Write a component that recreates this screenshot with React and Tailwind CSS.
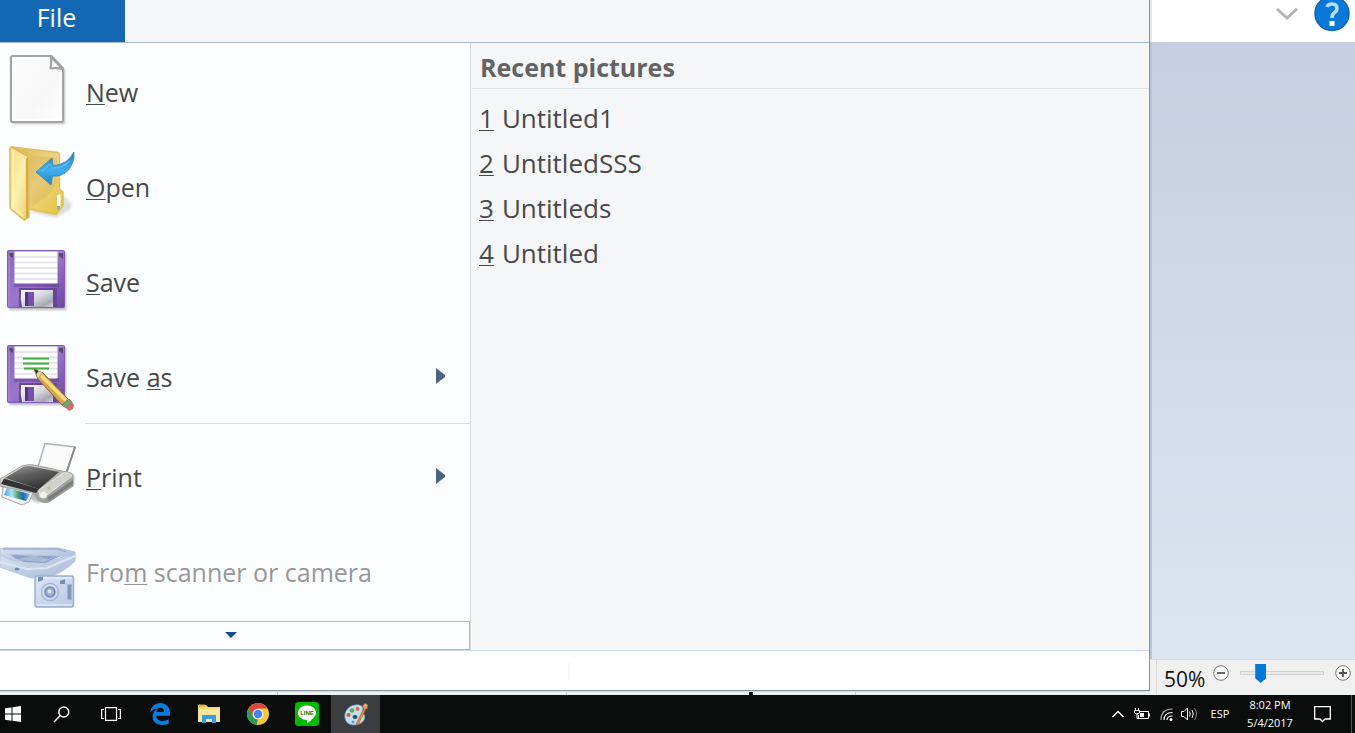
import { useState } from "react";

function NewIcon() {
  return (
    <svg width="76" height="95" viewBox="0 0 76 95" className="shrink-0" aria-hidden="true">
      <defs>
        <linearGradient id="page" x1="0" y1="0" x2="1" y2="1">
          <stop offset="0" stopColor="#fdfdfd" />
          <stop offset="0.6" stopColor="#f7f7f7" />
          <stop offset="1" stopColor="#fefefe" />
        </linearGradient>
        <filter id="soft" x="-20%" y="-20%" width="140%" height="140%">
          <feGaussianBlur stdDeviation="1.2" />
        </filter>
      </defs>
      <path d="M12 15H53L65 27V81H12Z" fill="#9a9a9a" opacity="0.55" filter="url(#soft)" />
      <path d="M12 13H51.500L63 25.500V77Q63 79 61 79H13Q11 79 11 77V14.500Q11 13 12.500 13Z" fill="url(#page)" stroke="#a3a3a3" strokeWidth="2.200" />
      <path d="M13 15H49V27H61V77H13Z" fill="none" stroke="#fff" strokeWidth="1.500" />
      <path d="M51 14Q51.500 20 50.500 25.500Q56 24.500 62.500 26Z" fill="#fbfbfb" stroke="#a3a3a3" strokeWidth="2.200" strokeLinejoin="round" />
    </svg>
  );
}

function OpenIcon() {
  return (
    <svg width="76" height="95" viewBox="0 0 76 95" className="shrink-0" aria-hidden="true">
      <defs>
        <linearGradient id="cover" x1="0" y1="0" x2="1" y2="1">
          <stop offset="0" stopColor="#f3da84" />
          <stop offset="0.5" stopColor="#fdf0ae" />
          <stop offset="1" stopColor="#e9c964" />
        </linearGradient>
        <linearGradient id="back" x1="0" y1="0" x2="1" y2="1">
          <stop offset="0" stopColor="#dcb75c" />
          <stop offset="0.5" stopColor="#eed482" />
          <stop offset="1" stopColor="#e4c43e" />
        </linearGradient>
        <linearGradient id="arrow" x1="0" y1="0" x2="0" y2="1">
          <stop offset="0" stopColor="#2a79b8" />
          <stop offset="0.55" stopColor="#3fb0ee" />
          <stop offset="1" stopColor="#1f7fc4" />
        </linearGradient>
      </defs>
      <path d="M30 74L56 80L70 72L72 66L62 56Z" fill="#999" opacity="0.3" filter="url(#soft)" />
      <path d="M12 9L58 14.500Q59.500 15 59.500 17V51L63 54V68L56 76.500L29 71L26 20Z" fill="url(#back)" stroke="#e3be58" strokeWidth="1.300" strokeLinejoin="round" />
      <path d="M30 18L57 19V46Q45 62 31 69Z" fill="#cda751" opacity="0.25" />
      <path d="M57 58Q59 55 60.500 57V69L57 72Z" fill="#fff" />
      <path d="M57 68H60V71L57 72Z" fill="#7fb7b0" />
      <path d="M10 10Q10 9 12 9L27 18Q29 20 29 23V79L24 82L11 71Q10 70 10 68Z" fill="url(#cover)" stroke="#dfb850" strokeWidth="1.500" strokeLinejoin="round" />
      <path d="M27 20V80" stroke="#d4a947" strokeWidth="2" />
      <path d="M13 12V69L23 78" fill="none" stroke="#fff6cb" strokeWidth="1.500" opacity="0.8" />
      <path d="M36 34L52 20L53 27.500Q67 27 74 14Q75 23 68.500 32Q62 39 52.500 38L51 47Z" fill="url(#arrow)" stroke="#3286bd" strokeWidth="0.800" />
      <path d="M42 33L50 26L52 30Q63 30 70 23" fill="none" stroke="#62bdf0" strokeWidth="1.200" />
    </svg>
  );
}

function Floppy() {
  return (
    <>
      <defs>
        <linearGradient id="purple" x1="0" y1="0" x2="1" y2="1">
          <stop offset="0" stopColor="#8c68bd" />
          <stop offset="0.5" stopColor="#9b77cb" />
          <stop offset="1" stopColor="#6d459f" />
        </linearGradient>
        <linearGradient id="steel" x1="0" y1="0" x2="1" y2="1">
          <stop offset="0" stopColor="#fff" />
          <stop offset="0.5" stopColor="#d5d5de" />
          <stop offset="0.8" stopColor="#a7a7b3" />
          <stop offset="1" stopColor="#d8d8df" />
        </linearGradient>
      </defs>
      <rect x="9" y="19" width="57" height="58" fill="#777" opacity="0.5" filter="url(#soft)" />
      <rect x="7.500" y="17.500" width="57" height="57" rx="1" fill="url(#purple)" stroke="#7f5bb2" />
      <path d="M9 73V19H63" fill="none" stroke="#a98bd6" />
      <path d="M9 20H13V25L10 23Z" fill="#5a4a6a" />
      <path d="M63 20H59V23L63 26Z" fill="#5a4a6a" />
      <rect x="14" y="50" width="45" height="4" fill="#60358f" opacity="0.5" />
      <rect x="14.500" y="18.500" width="43" height="32" fill="#fff" />
      <path d="M15 24H57M15 29.500H57M15 35H57M15 40.500H57M15 46H57" stroke="#dedee6" strokeWidth="1.300" />
      <rect x="19" y="55" width="38" height="19" fill="#68459a" />
      <path d="M21 57H53V74H22Q20 66 21 57Z" fill="url(#steel)" />
      <rect x="25" y="59" width="9" height="14" fill="#7650a9" />
      <path d="M25 59H28V73H25Z" fill="#583284" />
    </>
  );
}

function SaveIcon() {
  return (
    <svg width="76" height="95" viewBox="0 0 76 95" className="shrink-0" aria-hidden="true">
      <Floppy />
    </svg>
  );
}

function SaveAsIcon() {
  return (
    <svg width="76" height="95" viewBox="0 0 76 95" className="shrink-0" aria-hidden="true">
      <Floppy />
      <path d="M23 30.500H49M23 35.500H49M24 40.500H49" stroke="#a9e0a9" strokeWidth="3" />
      <path d="M23 30.500H49M23 35.500H49M24 40.500H49" stroke="#45ad45" strokeWidth="1.500" />
      <path d="M34 41L43 45L69 72L62 77L38 51Z" fill="#d9a54b" stroke="#8a6a3a" strokeWidth="1" />
      <path d="M42 46L67 71L65 74L40 49Z" fill="#f5dc7c" />
      <path d="M34 41L42 44.500L38 50Z" fill="#e8cda0" />
      <path d="M34 41L38.500 43L36.500 46Z" fill="#2b2b2b" />
      <path d="M62 77L69 71L72 74L66 80Z" fill="#7a9f78" stroke="#647a61" strokeWidth="0.800" />
      <path d="M66 80L72 74L74 77L73 81L69 83Z" fill="#d46a6a" />
    </svg>
  );
}

function PrintIcon() {
  return (
    <svg width="76" height="95" viewBox="0 0 76 95" className="shrink-0" aria-hidden="true">
      <defs>
        <linearGradient id="printer" x1="0" y1="0" x2="0.5" y2="1">
          <stop offset="0" stopColor="#a0a0a0" />
          <stop offset="0.45" stopColor="#606060" />
          <stop offset="1" stopColor="#343434" />
        </linearGradient>
        <linearGradient id="shell" x1="0" y1="0" x2="1" y2="1">
          <stop offset="0" stopColor="#f0f0ed" />
          <stop offset="0.5" stopColor="#b5b5b2" />
          <stop offset="1" stopColor="#898986" />
        </linearGradient>
        <linearGradient id="photo" x1="0" y1="0" x2="1" y2="0">
          <stop offset="0" stopColor="#4c9be8" />
          <stop offset="0.3" stopColor="#a9e6f2" />
          <stop offset="0.55" stopColor="#4d9c68" />
          <stop offset="0.75" stopColor="#1667cb" />
          <stop offset="1" stopColor="#89bde0" />
        </linearGradient>
      </defs>
      <path d="M0 57L38 75L74 57L74 46L40 60L2 50Z" fill="#777" opacity="0.45" filter="url(#soft)" />
      <path d="M45 15.500L75 19L66 46L38 39Z" fill="#fafafa" stroke="#b1b1b1" strokeWidth="1.500" />
      <path d="M75 19L66 46" stroke="#8a8a8a" strokeWidth="2" />
      <path d="M0 51L22 38Q30 35 39 38L71 45Q74 47 73 51L73 58L49 74Q43 76 38 72L34 66L0 58Z" fill="url(#shell)" stroke="#9c9c99" />
      <path d="M5 50L23 39Q26 38 30 38L59 44L39 61Z" fill="url(#printer)" />
      <path d="M4 50.500L39 61L36 65L1 56Z" fill="#333" />
      <path d="M39 62L63 45Q70 44 72 48L47 67L40 69Z" fill="#d0d0cd" stroke="#e7e7e5" />
      <path d="M47 70L73 52V56L49 73Z" fill="#666" opacity="0.6" />
      <circle cx="43.500" cy="67" r="3.500" fill="#f1f1e9" />
      <circle cx="49" cy="60" r="1.500" fill="#aac197" />
      <path d="M3 59L33 65L29 74L22 77L2 69Z" fill="#f0f1f2" stroke="#a9a9a9" />
      <path d="M7 60L30 66L26 73L4 67Z" fill="url(#photo)" />
    </svg>
  );
}

function ScannerIcon() {
  return (
    <svg width="76" height="95" viewBox="0 0 76 95" className="shrink-0" aria-hidden="true">
      <defs>
        <linearGradient id="scan" x1="0" y1="0" x2="1" y2="1">
          <stop offset="0" stopColor="#d8e2f2" />
          <stop offset="0.5" stopColor="#c0cfe5" />
          <stop offset="1" stopColor="#a5b9d6" />
        </linearGradient>
        <linearGradient id="cam" x1="0" y1="0" x2="1" y2="1">
          <stop offset="0" stopColor="#dce5f4" />
          <stop offset="1" stopColor="#b9c9e2" />
        </linearGradient>
      </defs>
      <path d="M0 31L21 37L46 40L75 29V38Q65 48 52 53L31 55L0 44Z" fill="url(#scan)" stroke="#b4c5de" />
      <path d="M7 32L30 30L66 31L45 40L24 39Z" fill="#8ba0c3" />
      <path d="M16 37L34 32L48 36L64 31L44 39Z" fill="#a9bad3" />
      <path d="M0 26Q5 24 10 25L58 25L75 29Q76 33 67 33L20 32L9 31L19 38Q9 38 0 31Z" fill="url(#scan)" stroke="#b4c5de" />
      <path d="M3 26H57L67 29" fill="none" stroke="#9db0cf" strokeWidth="1.500" />
      <path d="M0 39L27 46L47 45L75 33" fill="none" stroke="#dce6f5" strokeWidth="2" />
      <ellipse cx="17" cy="46" rx="2.500" ry="1.500" fill="#6f88b2" />
      <rect x="35" y="53" width="38.500" height="31" rx="2" fill="url(#cam)" stroke="#9bb0d1" strokeWidth="1.500" />
      <path d="M37 55H72M37 82H72" stroke="#f0f5fd" />
      <path d="M38 54H43V57L38 59ZM60 58L65 56V61H60Z" fill="#758db5" />
      <circle cx="50" cy="69" r="8.500" fill="#d2deef" stroke="#a2b6d4" strokeWidth="1.500" />
      <circle cx="50" cy="69" r="5" fill="#9cafcb" stroke="#7089b2" strokeWidth="1.500" />
      <circle cx="49.500" cy="68.500" r="2" fill="#dce7f5" />
      <rect x="67" y="61" width="5" height="16" fill="#8098bd" stroke="#bfcee5" />
    </svg>
  );
}

// `hot` is the access-key part of the label, drawn underlined
const FILE_ITEMS = [
  { icon: NewIcon, before: "", hot: "N", after: "ew" },
  { icon: OpenIcon, before: "", hot: "O", after: "pen" },
  { icon: SaveIcon, before: "", hot: "S", after: "ave" },
  { icon: SaveAsIcon, before: "Save ", hot: "a", after: "s", submenu: true },
];

const DEVICE_ITEMS = [
  { icon: PrintIcon, before: "", hot: "P", after: "rint", submenu: true },
  { icon: ScannerIcon, before: "Fro", hot: "m", after: " scanner or camera", disabled: true },
];

const RECENT = ["Untitled1", "UntitledSSS", "Untitleds", "Untitled"];

function MenuItem({ icon: Icon, before, hot, after, submenu, disabled }) {
  return (
    <li>
      <button
        type="button"
        disabled={disabled}
        className="flex h-[95px] w-full items-center gap-[10px] pr-6 text-left text-[25px] leading-9 text-[#484848] disabled:text-[#979797]"
      >
        <Icon />
        <span className="flex-1 whitespace-pre pt-0.5">
          {before}
          <span className="underline decoration-1 underline-offset-2">{hot}</span>
          {after}
        </span>
        {submenu && (
          <svg width="10" height="16" viewBox="0 0 10 16" aria-hidden="true">
            <path d="M0 0L9 7V9L0 16Z" fill="#4e637f" />
          </svg>
        )}
      </button>
    </li>
  );
}

function FileMenu() {
  return (
    <div className="flex min-h-0 flex-1 flex-col border-r border-b border-[#84919f] bg-white">
      <div className="flex h-[43px] shrink-0 border-b border-[#a9b9d0] bg-[#f5f6f8]">
        <button type="button" className="w-[125px] bg-[#1468b3] pr-3 pb-2 text-[25px] leading-[34px] text-white">
          File
        </button>
      </div>
      <div className="flex min-h-0 flex-1">
        <nav className="flex w-[471px] shrink-0 flex-col justify-between border-r border-[#d9dde3] bg-[#fbfdff]">
          <ul>
            {FILE_ITEMS.map((item) => (
              <MenuItem key={item.hot} {...item} />
            ))}
            <li role="separator" className="mb-1 ml-[85px] border-t border-[#d7dbe1]" />
            {DEVICE_ITEMS.map((item) => (
              <MenuItem key={item.hot} {...item} />
            ))}
          </ul>
          <button type="button" aria-label="More commands" className="flex h-[29px] shrink-0 items-center justify-center border-y border-r border-[#a1bbd9] pr-2 pb-0.5">
            <svg width="12" height="6" viewBox="0 0 12 6" aria-hidden="true">
              <path d="M0 0H12L6 6Z" fill="#174a91" />
            </svg>
          </button>
        </nav>
        <section className="flex-1 bg-[#f5f6f8]">
          <h2 className="ml-px h-[46px] border-b border-[#dcdfe3] pt-1.5 pl-2 text-[25px] leading-9 font-bold text-[#636363]">
            Recent pictures
          </h2>
          <ol className="pt-1.5 pl-2">
            {RECENT.map((name, i) => (
              <li key={name}>
                <button type="button" className="flex h-[45px] items-center gap-2 text-[26px] leading-9 text-[#484848]">
                  <span className="underline decoration-1 underline-offset-2">{i + 1}</span>
                  <span>{name}</span>
                </button>
              </li>
            ))}
          </ol>
        </section>
      </div>
      <div className="flex h-10 shrink-0 items-center border-t border-[#c9d5e8] pl-[568px]">
        <div className="h-4 w-0.5 bg-[#f5f6f8]" />
      </div>
    </div>
  );
}

function StatusStrip() {
  return (
    <div className="flex h-1 shrink-0 border-t border-[#d9dde1] bg-[#eff1f1]">
      <div className="w-[278px] border-r border-[#c5c9cd]" />
      <div className="w-[289px] border-r border-[#c5c9cd]" />
      <div className="w-[182px]" />
      <div className="w-1 bg-black" />
      <div className="w-[103px] border-r border-[#c5c9cd]" />
    </div>
  );
}

function ZoomButton({ label, d }) {
  return (
    <button type="button" aria-label={label} className="shrink-0">
      <svg width="16" height="16" viewBox="0 0 16 16">
        <circle cx="8" cy="8" r="7.300" fill="#fafafa" stroke="#777" />
        <path d={d} stroke="#555" strokeWidth="1.800" />
      </svg>
    </button>
  );
}

function Workspace() {
  const [zoom, setZoom] = useState(20);
  return (
    <div className="flex w-[205px] shrink-0 flex-col bg-white">
      <div className="flex h-[42px] items-start justify-end gap-4 border-l-2 border-[#e4e8eb] pr-[5px]">
        <button type="button" aria-label="Expand the ribbon" className="pt-2">
          <svg width="22" height="12" viewBox="0 0 22 12">
            <path d="M1 1L11 10L21 1" fill="none" stroke="#b5b5b5" strokeWidth="3" />
          </svg>
        </button>
        <button type="button" aria-label="Help">
          <svg width="36" height="32" viewBox="0 0 36 32">
            <circle cx="18" cy="13.500" r="17" fill="#0879d9" stroke="#1765ab" strokeWidth="1.500" />
            <path d="M13 7Q14 4 18 4Q23 4 23 8.500Q23 11 20 13Q18 14.500 18 18" fill="none" stroke="#b5dcfa" strokeWidth="3.500" />
            <rect x="15.500" y="21" width="5" height="5" fill="#fff" />
          </svg>
        </button>
      </div>
      <div className="flex-1 border-t border-l-2 border-t-[#c8ccd2] border-l-[#b9c4d5] bg-linear-to-b from-[#c6cfe1] to-[#dce6f2]" />
      <div className="flex h-9 shrink-0 items-start border-t border-[#dcdcdc] bg-[#f0f0f0]">
        <div className="mr-[7px] h-full w-[7px] border-r border-[#d9d9d9]" />
        <label htmlFor="zoom" className="w-[49px] pt-[5px] text-[21px] leading-7 text-[#111]">
          50%
        </label>
        <div className="flex h-[26px] flex-1 items-center justify-between pr-1">
          <ZoomButton label="Zoom out" d="M4 8H12" />
          <input
            id="zoom"
            type="range"
            value={zoom}
            onChange={(e) => setZoom(Number(e.target.value))}
            className="h-5 w-[84px] appearance-none bg-transparent [&::-webkit-slider-runnable-track]:h-1 [&::-webkit-slider-runnable-track]:border [&::-webkit-slider-runnable-track]:border-[#d2d2d2] [&::-webkit-slider-runnable-track]:bg-[#e9e9e9] [&::-webkit-slider-thumb]:-mt-2 [&::-webkit-slider-thumb]:h-[19px] [&::-webkit-slider-thumb]:w-[11px] [&::-webkit-slider-thumb]:appearance-none [&::-webkit-slider-thumb]:bg-[#0078d7] [&::-webkit-slider-thumb]:[clip-path:polygon(0_0,100%_0,100%_75%,50%_100%,0_75%)]"
          />
          <ZoomButton label="Zoom in" d="M4 8H12M8 4V12" />
        </div>
      </div>
    </div>
  );
}

function WindowsIcon() {
  return (
    <svg width="16" height="16" viewBox="0 0 16 16">
      <path d="M0 2.300L6.500 1.400V7.500H0ZM7.500 1.200L16 0V7.500H7.500ZM0 8.500H6.500V14.700L0 13.700ZM7.500 8.500H16V16L7.500 14.800Z" fill="#fff" />
    </svg>
  );
}

function SearchIcon() {
  return (
    <svg width="17" height="17" viewBox="0 0 17 17" fill="none" stroke="#fff" strokeWidth="1.400">
      <circle cx="10.800" cy="6" r="5" />
      <path d="M7.200 9.600L1 16" />
    </svg>
  );
}

function TaskViewIcon() {
  return (
    <svg width="20" height="14" viewBox="0 0 20 14" fill="none" stroke="#fff" strokeWidth="1.200">
      <path d="M4.500 0.600H15.500V13.400H4.500ZM3 2.500H0.600V11.500H3M17 2.500H19.400V11.500H17" />
    </svg>
  );
}

function EdgeIcon() {
  return (
    <svg width="20" height="22" viewBox="0 0 20 22">
      <path d="M0.200 9.700C1 3.500 5 0 10.300 0C16.500 0 20 4.500 20 10.500V12.700H6.300C6.700 16.700 9.500 18 12.500 18C15 18 17 17.300 18.700 16.300V20.500C16.500 21.600 14.300 22 12 22C6 22 2.600 18.300 2.600 13.500C2.600 10 4.500 7.200 7.500 5.600C4.300 5.900 2 7.200 0.200 9.700ZM6.500 9H14C14 6.300 12.800 4.800 10.500 4.800C8.300 4.800 6.900 6.500 6.500 9Z" fill="#0b7bdc" />
    </svg>
  );
}

function ExplorerIcon() {
  return (
    <svg width="22" height="20" viewBox="0 0 22 20">
      <path d="M0 1H8L10 3H22V18H0Z" fill="#f6d778" />
      <path d="M1 1.500H7" stroke="#dca72f" strokeWidth="2" />
      <path d="M0 5H22V18H0Z" fill="#fbe7a1" />
      <path d="M4 11H18V19H14V15H8V19H4Z" fill="#3a9edc" />
    </svg>
  );
}

function ChromeIcon() {
  return (
    <svg width="22" height="22" viewBox="0 0 22 22">
      <circle cx="11" cy="11" r="11" fill="#f7c940" />
      <path d="M1.500 5.500A11 11 0 0 1 20.500 5.500H11L6.200 13.800Z" fill="#d94a3c" />
      <path d="M1.500 5.500L6.200 13.700Q8 16.500 11 16.500L9.500 21.900A11 11 0 0 1 1.500 5.500Z" fill="#2f9b58" />
      <path d="M9.800 21.900L15.700 13.700L12 16.400Z" fill="#f7c940" />
      <circle cx="11" cy="11" r="5.300" fill="#f5f5f5" />
      <circle cx="11" cy="11" r="4.200" fill="#4285ee" />
    </svg>
  );
}

function LineIcon() {
  return (
    <svg width="24" height="24" viewBox="0 0 24 24">
      <rect width="24" height="24" rx="3.500" fill="#04b904" />
      <path d="M12 3.500C17 3.500 21 6.700 21 10.800C21 15 16 18 12 21.500V18C7 18 3 15 3 10.800C3 6.700 7 3.500 12 3.500Z" fill="#fff" />
      <text x="12" y="13" textAnchor="middle" fontFamily="Liberation Sans, sans-serif" fontSize="6" fontWeight="bold" fill="#047a04">
        LINE
      </text>
    </svg>
  );
}

function PaintIcon() {
  return (
    <svg width="24" height="24" viewBox="0 0 24 24">
      <path d="M11 3C4 4 0 10 1 16Q2 22 9 23Q17 23 20 18Q22 14 19 11Q18 9 19 6Q17 2 11 3Z" fill="#c3ddf0" stroke="#6ba5ce" strokeWidth="0.800" />
      <ellipse cx="11" cy="15" rx="2.500" ry="2" fill="#28506c" />
      <circle cx="4.500" cy="13" r="2" fill="#cf5747" />
      <circle cx="8" cy="8.500" r="2.200" fill="#63a54a" />
      <circle cx="13.500" cy="7" r="2" fill="#d96b4c" />
      <circle cx="9" cy="20" r="1.500" fill="#5f9bd0" />
      <path d="M20 6L22 7L14 23L12 22Z" fill="#e38732" stroke="#a2551a" strokeWidth="0.500" />
      <path d="M18.500 4L21 1L24 3L23 7L20 7.500Z" fill="#d9a46d" stroke="#895c31" strokeWidth="0.600" />
    </svg>
  );
}

const APPS = [
  { name: "Search", icon: SearchIcon },
  { name: "Task View", icon: TaskViewIcon },
  { name: "Microsoft Edge", icon: EdgeIcon },
  { name: "File Explorer", icon: ExplorerIcon },
  { name: "Google Chrome", icon: ChromeIcon },
  { name: "LINE", icon: LineIcon },
  { name: "Paint", icon: PaintIcon, active: true },
];

function Tray() {
  return (
    <div className="ml-auto flex items-center text-white">
      <button type="button" aria-label="Show hidden icons" className="mr-2.5">
        <svg width="12" height="8" viewBox="0 0 12 8" fill="none" stroke="#fff" strokeWidth="1.400">
          <path d="M0.500 7L6 1.500L11.500 7" />
        </svg>
      </button>
      <button type="button" aria-label="Battery" className="mr-2.5">
        <svg width="16" height="12" viewBox="0 0 16 12" fill="none" stroke="#fff">
          <path d="M5.500 3.500H14.500V10.500H4.500V7M15.500 5.500V8.500" />
          <path d="M1.500 0V2M4.500 0V2M0.500 2.500H5.500V5Q3 7 0.500 5ZM3 6V10.500H5" />
          <path d="M6 5H10V9H6Z" fill="#fff" stroke="none" />
        </svg>
      </button>
      <button type="button" aria-label="Network" className="mr-2">
        <svg width="13" height="13" viewBox="0 0 13 13" fill="none" stroke="#fff" strokeWidth="1.200">
          <path d="M1 12Q1 1 12.500 1" opacity="0.7" />
          <path d="M4 12Q4 4.500 12.500 4.500M7 12Q7 8 12.500 8" />
          <circle cx="11" cy="11.500" r="1.500" fill="#fff" stroke="none" />
        </svg>
      </button>
      <button type="button" aria-label="Volume" className="mr-3">
        <svg width="17" height="14" viewBox="0 0 17 14" fill="none" stroke="#fff">
          <path d="M0.500 4.500H3L6.500 1V13L3 9.500H0.500ZM8.500 4.500Q10 7 8.500 9.500M11 3Q13.500 7 11 11" />
          <path d="M13.500 1Q17.500 7 13.500 13" opacity="0.5" />
        </svg>
      </button>
      <button type="button" className="w-[20px] text-[11px] leading-4">ESP</button>
      <button type="button" className="ml-3 flex w-[56px] flex-col items-center gap-0.5 text-[11px] leading-4 whitespace-nowrap">
        <span>8:02 PM</span>
        <span>5/4/2017</span>
      </button>
      <button type="button" aria-label="Notifications" className="ml-4">
        <svg width="17" height="17" viewBox="0 0 17 17" fill="none" stroke="#fff" strokeWidth="1.300">
          <path d="M0.700 0.700H16.300V13H11L8.500 15.500L6 13H0.700Z" />
        </svg>
      </button>
      <button type="button" aria-label="Show desktop" className="ml-5 h-[38px] w-1 border-l border-[#555]" />
    </div>
  );
}

export default function App() {
  return (
    <div className="flex h-screen flex-col overflow-hidden bg-white font-['Open_Sans','Noto_Sans',sans-serif]">
      <main className="flex min-h-0 flex-1">
        <div className="flex min-w-0 flex-1 flex-col">
          <FileMenu />
          <StatusStrip />
        </div>
        <Workspace />
      </main>
      <footer className="flex h-[38px] shrink-0 items-center bg-[#0a0d0b]">
        <button type="button" aria-label="Start" className="w-[37px] pl-[5px]">
          <WindowsIcon />
        </button>
        {APPS.map(({ name, icon: Icon, active }) => (
          <button
            key={name}
            type="button"
            aria-label={name}
            className={`flex h-[38px] w-[49px] items-center justify-center ${active ? "bg-[#3b3d40]" : ""}`}
          >
            <Icon />
          </button>
        ))}
        <Tray />
      </footer>
    </div>
  );
}
